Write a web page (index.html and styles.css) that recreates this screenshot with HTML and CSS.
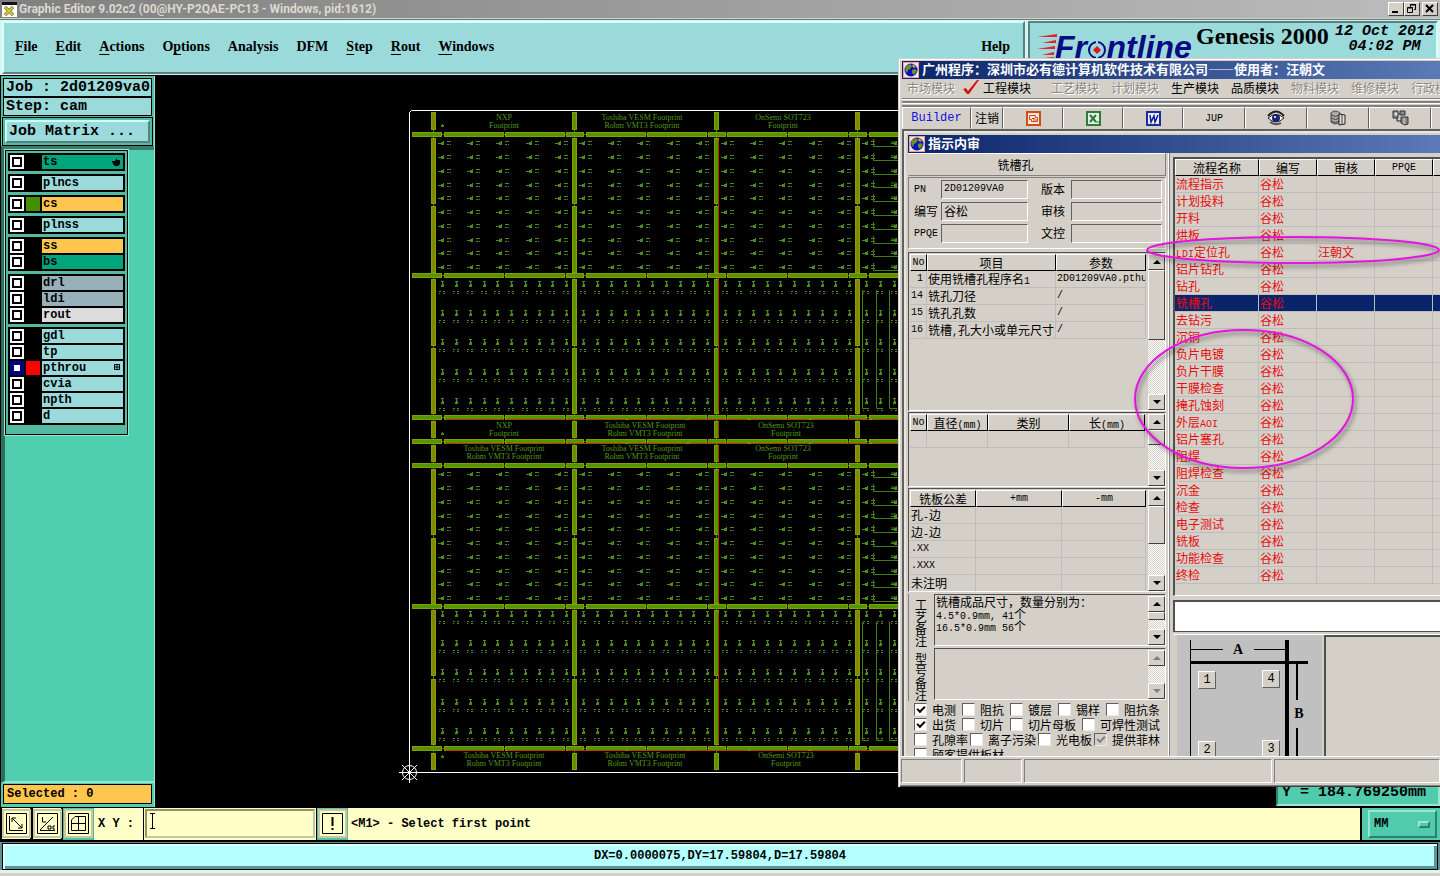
FILE: index.html
```html
<!DOCTYPE html>
<html lang="zh-CN">
<head>
<meta charset="utf-8">
<title>Graphic Editor 9.02c2</title>
<link rel="stylesheet" href="styles.css">
</head>
<body>
<svg class="defs" width="0" height="0" aria-hidden="true">
  <defs>
    <symbol id="globe" viewBox="0 0 16 16">
      <rect width="16" height="16" fill="#e8a0a0"/><rect x="1" y="1" width="14" height="14" fill="#f4dede"/>
      <circle cx="8" cy="8" r="6.5" fill="#0a14b4"/><path d="M3 4l4-2 2 2-2 3-2 1-1 3-2-3zM9 8l3-1 2 2-3 4-2-2z" fill="#6f8f2a"/>
      <path d="M10 2l3 3-2 1-2-2z" fill="#c8a040"/><path d="M13 14l2-4v5h-6z" fill="#fff"/>
    </symbol>
    <g id="ca" fill="#4a8c1c"><path d="M0 0h3v1H0zM3-1h3v3H3zM5-2h1v1H5z"/><path d="M9-2h3v1H9zM9 1h2v1H9zM12 1h1v1h-1zM12-2h1v1h-1z"/></g>
    <g id="cb" fill="#4a8c1c"><path d="M-1-3h3v1h-1v2h1v3h-3V1h1v-3h-1z"/><path d="M-3 7h2v1h-2zM1 7h2v1H1zM-3 9h1v1h-1zM1 9h2v1H1z"/></g>
    <g id="ra"><use href="#ca"/><use href="#ca" x="29"/><use href="#ca" x="58"/><use href="#ca" x="88"/><use href="#ca" x="117"/></g>
    <g id="ra2"><use href="#ra"/><use href="#ra" y="14"/></g>
    <g id="cellA"><use href="#ra2"/><use href="#ra2" y="28"/><use href="#ra2" y="55"/><use href="#ra2" y="83"/><use href="#ra2" y="110"/></g>
    <g id="rb2"><use href="#cb"/><use href="#cb" x="14"/></g>
    <g id="rb"><use href="#rb2"/><use href="#rb2" x="28"/><use href="#rb2" x="55"/><use href="#rb2" x="83"/><use href="#rb2" x="110"/></g>
    <g id="cellB"><use href="#rb"/><use href="#rb" y="29"/><use href="#rb" y="58"/><use href="#rb" y="88"/><use href="#rb" y="117"/></g>
    <g id="hs"><rect x="444" y="-2" width="59" height="4"/><rect x="505" y="-2" width="59" height="4"/><rect x="566" y="-2" width="17" height="4"/></g>
    <g id="hbar" fill="#4f9600" stroke="#8c9a00"><path d="M412 0H900" stroke="#3f8010"/><rect x="412" y="-2" width="29" height="4"/><use href="#hs"/><use href="#hs" x="142"/><use href="#hs" x="283"/><rect x="869" y="-2" width="59" height="4"/></g>
    <g id="vbar" stroke="#8c9a00"><path d="M0 112V770" stroke="#3f8010"/>
      <rect x="-2" y="112" width="4" height="17"/><rect x="-2" y="138" width="4" height="65"/><rect x="-2" y="206" width="4" height="66"/><rect x="-2" y="279" width="4" height="66"/><rect x="-2" y="348" width="4" height="65"/><rect x="-2" y="421" width="4" height="16"/><rect x="-2" y="445" width="4" height="16"/><rect x="-2" y="469" width="4" height="65"/><rect x="-2" y="538" width="4" height="65"/><rect x="-2" y="610" width="4" height="65"/><rect x="-2" y="679" width="4" height="65"/><rect x="-2" y="753" width="4" height="16"/></g>
    <g id="lshape" fill="none" stroke="#3f8010"><path d="M873.500 -4V3.500H899M891 -1h5"/></g>
    <g id="ls5"><use href="#lshape"/><use href="#lshape" y="14"/><use href="#lshape" y="28"/><use href="#lshape" y="41"/><use href="#lshape" y="55"/></g>
  </defs>
</svg>

<header class="titlebar">
  <svg class="app-icon" width="15" height="15" viewBox="0 0 15 15"><rect width="15" height="15" fill="#fff"/><rect width="15" height="3" fill="#112"/><path d="M3 5l8 8M11 5l-8 8" stroke="#333" stroke-width="3"/><path d="M3 5l8 8M11 5l-8 8" stroke="#d8d020" stroke-width="2"/></svg>
  <h1>Graphic Editor 9.02c2 (00@HY-P2QAE-PC13 - Windows, pid:1612)</h1>
  <div class="winbtns">
    <button aria-label="Minimize"><svg width="12" height="10"><path d="M2 8h6" stroke="#000" stroke-width="2"/></svg></button>
    <button aria-label="Restore"><svg width="12" height="10" fill="none" stroke="#000"><path d="M4.500 3V.5h5v5H8M4 1h6M1.500 4v4.500h5v-5h-5M1 4h6"/></svg></button>
    <button class="close" aria-label="Close"><svg width="12" height="10"><path d="M2 1l7 7M9 1l-7 7" stroke="#000" stroke-width="2"/></svg></button>
  </div>
</header>

<div class="top">
  <nav class="menu">
    <a href="#"><u>F</u>ile</a><a href="#"><u>E</u>dit</a><a href="#"><u>A</u>ctions</a><a href="#">O<u>p</u>tions</a><a href="#">Analysis</a><a href="#">DFM</a><a href="#"><u>S</u>tep</a><a href="#"><u>R</u>out</a><a href="#"><u>W</u>indows</a>
    <a href="#" class="help">Help</a>
  </nav>
  <div class="brand">
    <svg class="logo" width="162" height="36" viewBox="0 0 162 36">
      <g fill="#e8202a"><path d="M4 6l20-3v3zM9 12l14-3v3zM4 18l18-3v3zM9 24l12-3v3zM1 28l20-2v2z"/></g>
      <text x="22" y="27" class="logo-text">Fr<tspan fill="none">o</tspan>ntline</text>
      <circle cx="64" cy="19" r="8" fill="none" stroke="#0a0a82" stroke-width="2"/><path d="M64 15l4 4-4 4-4-4z" fill="#e8101a"/><path d="M64 9v4M64 25v4" stroke="#9bdada" stroke-width="2"/>
    </svg>
    <div class="product"><strong>Genesis 2000</strong><span>Graphic Editor</span></div>
    <time>12 Oct 2012<br>04:02 PM</time>
  </div>
</div>

<main class="work">
  <aside class="side">
    <div class="job"><p>Job : 2d01209va0</p><p>Step: cam</p></div>
    <div class="matrix"><button>Job Matrix ...</button></div>
    <div class="layers-wrap">
      <div class="layers">
        <div class="grp"><label class="g"><input type="checkbox"><i></i><span>ts</span><svg class="mark" width="9" height="8"><path d="M0 3h3l2-3v2h3v4l-2 2H3L1 6z"/></svg></label></div>
        <div class="grp"><label><input type="checkbox"><i></i><span>plncs</span></label></div>
        <div class="grp"><label class="o"><input type="checkbox"><i class="green"></i><span>cs</span></label></div>
        <div class="grp"><label><input type="checkbox"><i></i><span>plnss</span></label></div>
        <div class="grp"><label class="o"><input type="checkbox"><i></i><span>ss</span></label><label class="g"><input type="checkbox"><i></i><span>bs</span></label></div>
        <div class="grp"><label class="b"><input type="checkbox"><i></i><span>drl</span></label><label class="b"><input type="checkbox"><i></i><span>ldi</span></label><label class="w"><input type="checkbox"><i></i><span>rout</span></label></div>
        <div class="grp"><label><input type="checkbox"><i></i><span>gdl</span></label><label><input type="checkbox"><i></i><span>tp</span></label><label><input type="checkbox" checked><i class="red"></i><span>pthrou</span><svg class="mark" width="7" height="7" fill="none" stroke="#000"><path d="M.5.5h5v5h-5zM3 .5v5M.5 3h5"/></svg></label><label><input type="checkbox"><i></i><span>cvia</span></label><label><input type="checkbox"><i></i><span>npth</span></label><label><input type="checkbox"><i></i><span>d</span></label></div>
      </div>
    </div>
    <p class="selected">Selected : 0</p>
  </aside>
  <section class="board">
    <svg class="pcb" width="100%" height="100%" aria-label="PCB panel">
      <g transform="translate(-155 -76)">
        <path d="M900 110.500H411.500L409.500 112.500V772.500H900" fill="none" stroke="#fff"/>
        <use href="#cellA" x="438" y="143"/><use href="#cellA" x="579" y="143"/><use href="#cellA" x="721" y="143"/>
        <use href="#cellB" x="442" y="284"/><use href="#cellB" x="583" y="284"/><use href="#cellB" x="725" y="284"/>
        <use href="#cellA" x="438" y="474"/><use href="#cellA" x="579" y="474"/><use href="#cellA" x="721" y="474"/>
        <use href="#cellB" x="442" y="614"/><use href="#cellB" x="583" y="614"/><use href="#cellB" x="725" y="614"/>
        <use href="#cellA" x="862" y="143"/><use href="#cellA" x="862" y="474"/><use href="#cellB" x="866" y="284"/><use href="#cellB" x="866" y="614"/>
        <use href="#ls5" y="143"/><use href="#ls5" y="212"/><use href="#ls5" y="474"/><use href="#ls5" y="543"/>
        <path d="M862.500 290V408.500H868M876.500 290V408.500H882M889.500 290V408.500H896M862.500 622V740.500H868M876.500 622V740.500H882M889.500 622V740.500H896" fill="none" stroke="#3f8010"/>
        <g transform="translate(.5 .5)">
          <use href="#vbar" x="433" fill="#7d8c00"/><use href="#vbar" x="574" fill="#5c9400"/><use href="#vbar" x="716" fill="#4f9600"/><use href="#vbar" x="857" fill="#7d8c00"/>
          <path d="M718 139V411M718 421V437M718 445V461M718 470V602M718 612V743" stroke="#c02800"/>
          <use href="#hbar" y="134"/><use href="#hbar" y="275"/><use href="#hbar" y="417"/><use href="#hbar" y="441"/><use href="#hbar" y="465"/><use href="#hbar" y="606"/><use href="#hbar" y="748"/>
          <path d="M445 419H898M445 443H898M445 750H898" stroke="#c03800" stroke-dasharray="58 3"/>
        </g>
        <g class="silk">
          <text x="504" y="120">NXP</text><text x="504" y="128">Footprint</text>
          <text x="642" y="120">Toshiba VESM Footprint</text><text x="642" y="128">Rohm VMT3 Footprint</text>
          <text x="783" y="120">OnSemi SOT723</text><text x="783" y="128">Footprint</text>
          <text x="504" y="428">NXP</text><text x="504" y="436">Footprint</text>
          <text x="645" y="428">Toshiba VESM Footprint</text><text x="645" y="436">Rohm VMT3 Footprint</text>
          <text x="786" y="428">OnSemi SOT723</text><text x="786" y="436">Footprint</text>
          <text x="504" y="451">Toshiba VESM Footprint</text><text x="504" y="459">Rohm VMT3 Footprint</text>
          <text x="642" y="451">Toshiba VESM Footprint</text><text x="642" y="459">Rohm VMT3 Footprint</text>
          <text x="783" y="451">OnSemi SOT723</text><text x="783" y="459">Footprint</text>
          <text x="504" y="758">Toshiba VESM Footprint</text><text x="504" y="766">Rohm VMT3 Footprint</text>
          <text x="645" y="758">Toshiba VESM Footprint</text><text x="645" y="766">Rohm VMT3 Footprint</text>
          <text x="786" y="758">OnSemi SOT723</text><text x="786" y="766">Footprint</text>
        </g>
        <path d="M442 124h1v1h1v2h-3v-2h1zM442 432h1v1h1v2h-3v-2h1zM442 755h1v1h1v2h-3v-2h1z" fill="#3f8010"/>
        <g fill="none" stroke="#fff"><circle cx="409.500" cy="772.500" r="7"/><path d="M399 772.500h21M409.500 762v21M402 765l15 15M417 765l-15 15"/></g>
      </g>
    </svg>
    <div class="coord">Y = 184.769250mm</div>
  </section>
</main>

<div class="cmd">
  <button class="tool" aria-label="Zoom"><svg width="21" height="21" fill="none" stroke="#000"><path d="M.5.5h20v20H.5zM3.500 3v14.500H17M6 5l10 10M6 9V5h4M16 11v4h-4"/></svg></button>
  <button class="tool" aria-label="Angle"><svg width="21" height="21" fill="none" stroke="#000"><path d="M.5.5h20v20H.5zM3 17.500h15M3 17L16 4M5.500 4v5H9M11 13h3v3h-3zM18 13h-2v3h2"/></svg></button>
  <button class="tool on" aria-label="Grid"><svg width="21" height="21" fill="none" stroke="#000"><path d="M.5.5h20v20H.5zM7 3.500h10.500v14H3.500V7zM10.500 4v13M4 10.500h13"/></svg></button>
  <label class="xy" for="xy">X Y :</label>
  <div class="field"><input id="xy" type="text"><svg class="ibeam" width="7" height="16" fill="none" stroke="#000"><path d="M1 .5h5M3.500 1v14M1 15.500h5"/></svg></div>
  <button class="tool on" aria-label="Alert"><svg width="21" height="21" fill="none" stroke="#000"><path d="M.5.5h20v20H.5z"/><path d="M10.500 4v9M10.500 15v2" stroke-width="2"/></svg></button>
  <p class="prompt">&lt;M1&gt; - Select first point</p>
  <div class="unit"><select aria-label="Unit"><option>MM</option></select><i></i></div>
</div>
<footer class="status"><p>DX=0.0000075,DY=17.59804,D=17.59804</p></footer>

<section class="program">
  <h2 class="bar"><svg width="16" height="16"><use href="#globe"/></svg><span>广州程序：深圳市必有德计算机软件技术有限公司——使用者：汪朝文</span></h2>
  <nav class="modules">
    <a href="#" class="off">市场模块</a><a href="#" class="picked"><svg width="18" height="16"><path d="M1 10l3-1 2 3 9-11h2L7 15H5z" fill="#d81010"/></svg>工程模块</a><a href="#" class="off">工艺模块</a><a href="#" class="off">计划模块</a><a href="#">生产模块</a><a href="#">品质模块</a><a href="#" class="off">物料模块</a><a href="#" class="off">维修模块</a><a href="#" class="off">行政模块</a>
  </nav>
  <div class="rails"></div>
  <div class="toolbar">
    <button class="builder">Builder</button><button class="logout">注销</button>
    <button class="t60" aria-label="PowerPoint"><svg width="15" height="15"><rect x="1" y="1" width="13" height="13" fill="#fbe5d8" stroke="#cf4d1a" stroke-width="2"/><path d="M3.500 4.500h6v2h2v4h-6v-2h-2zM6 7.500h3M7 9h4" fill="none" stroke="#cf4d1a"/></svg></button>
    <button class="t60" aria-label="Excel"><svg width="15" height="15"><rect x="1" y="1" width="13" height="13" fill="#e2f2e2" stroke="#2c7a3c" stroke-width="2"/><path d="M4 4l6 7M10 4l-6 7" stroke="#2c7a3c" stroke-width="2"/><path d="M10 11h3" stroke="#2c7a3c"/></svg></button>
    <button class="t60" aria-label="Word"><svg width="15" height="15"><rect x="1" y="1" width="13" height="13" fill="#e8ecff" stroke="#1c2ca0" stroke-width="2"/><path d="M4 4l1 7 3-6 1 6 3-7" fill="none" stroke="#101c90" stroke-width="1.500"/></svg></button>
    <button class="t62 jup">JUP</button>
    <button class="t62" aria-label="View"><svg width="18" height="16"><path d="M1 6Q9-3 17 6" fill="none" stroke="#222" stroke-width="2"/><path d="M1 8Q9 1 17 8Q9 16 1 8z" fill="#fff" stroke="#222"/><circle cx="9" cy="8" r="4" fill="#1c2470"/><circle cx="8" cy="7" r="1" fill="#fff"/><path d="M3 12q6 4 11 1" fill="none" stroke="#555" stroke-width="2"/></svg></button>
    <button class="t62" aria-label="Database"><svg width="17" height="16"><path d="M1 3q4-4 9 0v9q-5 4-9 0z" fill="#aaa" stroke="#444"/><path d="M1 5q4 3 9 0M1 8q4 3 9 0M1 11q4 3 9 0" fill="none" stroke="#444"/><path d="M9 4l6 1v9l-6 1z" fill="#ddd" stroke="#222"/><path d="M12 5v9" stroke="#444"/></svg></button>
    <button class="t62" aria-label="Network"><svg width="17" height="16"><path d="M1 1h5v7H1zM8 1h5v4H8zM9 7h7v7l-3 1-4-2z" fill="#888" stroke="#333"/><path d="M6 4h2M5 8v3h4" fill="none" stroke="#222"/><path d="M3 3h2v2H3zM12 8v6" stroke="#ddd" fill="#ddd"/></svg></button>
    <button class="t62" aria-label="More"></button>
  </div>

  <div class="child">
    <h3 class="bar"><svg width="16" height="16"><use href="#globe"/></svg><span>指示内审</span></h3>
    <div class="cols">
      <div class="left">
        <p class="caption">铣槽孔</p>
        <form class="info">
          <label for="pn" class="lat">PN</label><input id="pn" value="2D01209VA0" class="lat">
          <label for="ver">版本</label><input id="ver">
          <label for="wr">编写</label><input id="wr" value="谷松">
          <label for="ck">审核</label><input id="ck">
          <label for="pp" class="lat">PPQE</label><input id="pp">
          <label for="dc">文控</label><input id="dc">
        </form>
        <div class="pane p1">
          <div class="view"><table><colgroup><col class="c17"><col class="c129"><col class="c90"></colgroup>
            <thead><tr><th class="lat">No</th><th>项目</th><th>参数</th></tr></thead>
            <tbody><tr><td class="lat num">1</td><td>使用铣槽孔程序名<span class="lat">1</span></td><td class="lat">2D01209VA0.pthu</td></tr>
            <tr><td class="lat num">14</td><td>铣孔刀径</td><td class="lat">/</td></tr>
            <tr><td class="lat num">15</td><td>铣孔孔数</td><td class="lat">/</td></tr>
            <tr><td class="lat num">16</td><td>铣槽<span class="lat">,</span>孔大小或单元尺寸</td><td class="lat">/</td></tr></tbody></table></div>
          <div class="sb"><button class="up" aria-label="Up"></button><i class="thumb h70"></i><button class="dn" aria-label="Down"></button></div>
        </div>
        <div class="pane p2">
          <div class="view"><table><colgroup><col class="c17"><col class="c61"><col class="c81"><col class="c76"></colgroup>
            <thead><tr><th class="lat">No</th><th>直径<span class="lat">(mm)</span></th><th>类别</th><th>长<span class="lat">(mm)</span></th></tr></thead>
            <tbody><tr><td></td><td></td><td></td><td></td></tr></tbody></table></div>
          <div class="sb"><button class="up" aria-label="Up"></button><i class="thumb h15"></i><button class="dn" aria-label="Down"></button></div>
        </div>
        <div class="pane p3">
          <div class="view"><table><colgroup><col class="c66"><col class="c86"><col class="c84"></colgroup>
            <thead><tr><th>铣板公差</th><th class="lat">+mm</th><th class="lat">-mm</th></tr></thead>
            <tbody><tr><td>孔<span class="lat">-</span>边</td><td></td><td></td></tr><tr><td>边<span class="lat">-</span>边</td><td></td><td></td></tr><tr><td class="lat">.XX</td><td></td><td></td></tr><tr><td class="lat">.XXX</td><td></td><td></td></tr><tr><td>未注明</td><td></td><td></td></tr></tbody></table></div>
          <div class="sb"><button class="up" aria-label="Up"></button><i class="thumb h38"></i><button class="dn" aria-label="Down"></button></div>
        </div>
        <div class="notes">
          <span class="vert">工艺备注</span>
          <div class="pane memo"><div class="view" tabindex="0">铣槽成品尺寸，数量分别为：<br><span class="lat">4.5*0.9mm, 41</span>个<br><span class="lat">16.5*0.9mm 56</span>个</div>
            <div class="sb"><button class="up" aria-label="Up"></button><i class="thumb h8"></i><button class="dn" aria-label="Down"></button></div></div>
          <span class="vert">型号备注</span>
          <div class="pane memo"><div class="view"></div>
            <div class="sb"><button class="up" disabled aria-label="Up"></button><button class="dn" disabled aria-label="Down"></button></div></div>
        </div>
        <div class="checks">
          <div><label><input type="checkbox" checked>电测</label><label><input type="checkbox">阻抗</label><label><input type="checkbox">镀层</label><label><input type="checkbox">锡样</label><label><input type="checkbox">阻抗条</label></div>
          <div><label><input type="checkbox" checked>出货</label><label><input type="checkbox">切片</label><label><input type="checkbox">切片母板</label><label><input type="checkbox">可焊性测试</label></div>
          <div class="tight"><label><input type="checkbox">孔隙率</label><label><input type="checkbox">离子污染</label><label><input type="checkbox">光电板</label><label><input type="checkbox" checked disabled>提供菲林</label></div>
          <div><label><input type="checkbox">顾客提供板材</label></div>
        </div>
      </div>
      <div class="right">
        <div class="flow"><table><colgroup><col class="c84"><col class="c58"><col class="c58"><col class="c58"><col class="c84"></colgroup>
          <thead><tr><th>流程名称</th><th>编写</th><th>审核</th><th class="lat">PPQE</th><th></th></tr></thead>
          <tbody>
          <tr><td>流程指示</td><td>谷松</td><td></td><td></td><td></td></tr>
          <tr><td>计划投料</td><td>谷松</td><td></td><td></td><td></td></tr>
          <tr><td>开料</td><td>谷松</td><td></td><td></td><td></td></tr>
          <tr><td>烘板</td><td>谷松</td><td></td><td></td><td></td></tr>
          <tr><td><span class="lat">LDI</span>定位孔</td><td>谷松</td><td>汪朝文</td><td></td><td></td></tr>
          <tr><td>铝片钻孔</td><td>谷松</td><td></td><td></td><td></td></tr>
          <tr><td>钻孔</td><td>谷松</td><td></td><td></td><td></td></tr>
          <tr class="cur"><td>铣槽孔</td><td>谷松</td><td></td><td></td><td></td></tr>
          <tr><td>去钻污</td><td>谷松</td><td></td><td></td><td></td></tr>
          <tr><td>沉铜</td><td>谷松</td><td></td><td></td><td></td></tr>
          <tr><td>负片电镀</td><td>谷松</td><td></td><td></td><td></td></tr>
          <tr><td>负片干膜</td><td>谷松</td><td></td><td></td><td></td></tr>
          <tr><td>干膜检查</td><td>谷松</td><td></td><td></td><td></td></tr>
          <tr><td>掩孔蚀刻</td><td>谷松</td><td></td><td></td><td></td></tr>
          <tr><td>外层<span class="lat">AOI</span></td><td>谷松</td><td></td><td></td><td></td></tr>
          <tr><td>铝片塞孔</td><td>谷松</td><td></td><td></td><td></td></tr>
          <tr><td>阻焊</td><td>谷松</td><td></td><td></td><td></td></tr>
          <tr><td>阻焊检查</td><td>谷松</td><td></td><td></td><td></td></tr>
          <tr><td>沉金</td><td>谷松</td><td></td><td></td><td></td></tr>
          <tr><td>检查</td><td>谷松</td><td></td><td></td><td></td></tr>
          <tr><td>电子测试</td><td>谷松</td><td></td><td></td><td></td></tr>
          <tr><td>铣板</td><td>谷松</td><td></td><td></td><td></td></tr>
          <tr><td>功能检查</td><td>谷松</td><td></td><td></td><td></td></tr>
          <tr><td>终检</td><td>谷松</td><td></td><td></td><td></td></tr>
          </tbody></table></div>
        <input class="remark" aria-label="备注">
        <div class="lower">
          <div class="sketch">
            <svg width="145" height="122" aria-hidden="true">
              <path d="M13.500 5v117M13 14.500h33M77 14.500h32" stroke="#000"/><path d="M13 27.500h118" stroke="#000" stroke-width="3"/><path d="M110 5v117" stroke="#000" stroke-width="4"/><path d="M120 28v37M120 93v29" stroke="#000" stroke-width="2"/>
              <text x="61" y="19">A</text><text x="122" y="83">B</text>
            </svg>
            <button class="n1">1</button><button class="n4">4</button><button class="n2">2</button><button class="n3">3</button>
          </div>
          <div class="blank"></div>
        </div>
      </div>
    </div>
  </div>
  <div class="statusbar"><span class="s60"></span><span class="s58"></span><span class="s248"></span><span class="rest"></span></div>
</section>

<svg class="ink" width="100%" height="100%" aria-hidden="true">
  <ellipse cx="1293" cy="250" rx="146" ry="13"/><ellipse cx="1244" cy="399" rx="109" ry="69"/>
</svg>
</body>
</html>
```

FILE: styles.css
```css
*, *::before { box-sizing: border-box; }
body { margin: 0; height: 100vh; min-height: 840px; position: relative; display: flex; flex-direction: column; overflow: hidden; background: #5f8f90; font: 12px "Liberation Mono", "Noto Sans CJK SC", monospace; color: #000; }
h1, h2, h3, p { margin: 0; font-weight: bold; }
a { color: inherit; text-decoration: none; }
button, input, select { font: inherit; color: inherit; margin: 0; padding: 0; border-radius: 0; }
.defs { position: absolute; }

.titlebar { flex: 0 0 19px; display: flex; align-items: center; gap: 2px; padding: 0 2px; background: linear-gradient(90deg, #808080, #bcbcbc); border-bottom: 1px solid #d4d0c8; }
.titlebar h1 { flex: 1; font: bold 12px Roboto, sans-serif; line-height: 18px; color: #dcd8d0; }
.winbtns { display: flex; }
.winbtns button { width: 16px; height: 14px; background: #d4d0c8; border: 1px solid; border-color: #fff #404040 #404040 #fff; display: flex; justify-content: center; align-items: center; }
.winbtns .close { margin-left: 2px; }

.top { flex: 0 0 57px; display: flex; gap: 3px; background: #d8f4f0; padding: 1px 2px 1px 2px; border-top: 1px solid #5a7f7e; border-bottom: 1px solid #000; }
.menu, .brand { background: #9bdada; border: 2px solid; border-color: #d4fffb #5a8080 #5a8080 #d4fffb; }
.menu { flex: 1; display: flex; align-items: center; gap: 18px; padding: 0 13px 2px 11px; font: bold 14px "Liberation Serif", serif; }
.menu u { text-underline-offset: 3px; }
.help { margin-left: auto; }
.brand { flex: 0 0 410px; display: flex; align-items: flex-start; padding-left: 3px; overflow: hidden; border-color: #5a8080 #d4fffb #d4fffb #5a8080; }
.logo { margin-top: 8px; flex: none; }
.logo-text { font: italic bold 32px "Liberation Sans", sans-serif; fill: #0a0a82; }
.product { flex: none; width: 138px; font-family: "Liberation Serif", serif; }
.product strong { display: block; font-size: 24px; line-height: 26px; padding-left: 1px; white-space: nowrap; }
.product span { display: block; margin: 7px 0 0 10px; font-size: 14px; line-height: 16px; font-weight: bold; }
.brand time { flex: 1; font: italic bold 15px "Liberation Mono", monospace; line-height: 15px; text-align: center; white-space: nowrap; padding-top: 1px; }

.work { flex: 1; min-height: 0; display: flex; background: #000; padding-left: 1px; }
.side { flex: 0 0 154px; display: flex; flex-direction: column; background: #50cfb0; border-right: 1px solid #9be5d2; font-weight: bold; }
.job { padding: 2px 2px 1px; background: #55baa2; }
.job p { border: 1px solid #000; background: #9bdada; font: bold 15px "Liberation Mono", monospace; line-height: 17px; padding-left: 2px; white-space: nowrap; }
.matrix { margin: 0 1px; border: 1px solid #000; background: #55baa2; padding: 2px; }
.matrix button { width: 100%; height: 23px; background: #9bdada; border: 2px solid; border-color: #c8fffa #5a8080 #5a8080 #c8fffa; font: bold 15px "Liberation Mono", monospace; text-align: left; padding-left: 2px; display: flex; align-items: center; }
.layers-wrap { flex: 1; border-left: 4px solid #2f6f60; border-top: 4px solid #3a7d6d; border-bottom: 2px solid #9be5d2; }
.layers { width: 123px; border: 1px solid #000; outline: 1px solid #9be5d2; background: #55baa2; padding: 2px 2px 9px; display: flex; flex-direction: column; gap: 3px; }
.grp { background: #000; border: 1px solid #000; }
.grp label { display: flex; height: 16px; gap: 2px; padding: 1px; position: relative; }
.grp input { appearance: none; width: 14px; height: 14px; background: #fff; border: 0; display: grid; place-items: center; }
.grp input::before { content: ""; width: 10px; height: 10px; border: 2px solid #000; background: #fff; }
.grp input:checked { background: #000080; }
.grp input:checked::before { border-color: #000080; }
.grp i { width: 14px; height: 14px; background: #000; }
.grp i.green { background: #429000; }
.grp i.red { background: #f00; }
.grp span { flex: 1; background: #9bdada; line-height: 14px; padding-left: 1px; }
.grp .g span { background: #00a57c; }
.grp .o span { background: #ffc64f; }
.grp .b span { background: #97b0ba; }
.grp .w span { background: #dcdcdc; }
.mark { position: absolute; right: 3px; top: 4px; }
.selected { margin: 1px 2px 3px; border: 1px solid #000; background: #ffc64f; line-height: 18px; padding-left: 3px; }
.board { flex: 1; min-width: 0; position: relative; }
.pcb { display: block; position: absolute; }
.silk text { font: 8px "Liberation Serif", serif; fill: #529a14; text-anchor: middle; }
.coord { position: absolute; right: 0; bottom: 1px; width: 164px; height: 60px; background: #50cbac; border: 2px solid; border-color: #9be5d2 #9be5d2 #9be5d2 #2f7f6f; padding: 36px 0 0 4px; font: bold 15px "Liberation Mono", monospace; line-height: 17px; white-space: nowrap; }

.cmd { flex: 0 0 35px; display: flex; background: #ffffc8; border: solid #000; border-width: 1px 0 2px 1px; font-weight: bold; }
.tool { width: 31px; height: 32px; background: #ffffc8; border: 1px solid #000; border-width: 0 2px 1px 1px; padding: 0; display: grid; place-items: center; }
.tool svg { box-sizing: content-box; padding: 2px; border: 2px solid #c8c8a0; background: #ffffc8; }
.tool.on { background: #50cbac; border-color: #55baa2; }
.xy { width: 49px; line-height: 32px; padding-left: 4px; }
.field { position: relative; width: 174px; border-left: 1px solid #000; border-right: 1px solid #000; padding: 1px; }
.field input { width: 100%; height: 29px; background: #ffffc8; border: 2px solid; border-color: #94946c #c8c8a0 #c8c8a0 #94946c; padding: 0 12px; }
.ibeam { position: absolute; left: 5px; top: 5px; }
.prompt { flex: 1; line-height: 32px; padding-left: 3px; }
.unit { position: relative; width: 80px; background: #50cbac; border-left: 2px solid #000; padding: 2px 3px 1px 6px; }
.unit select { appearance: none; width: 100%; height: 28px; background: #50cbac; border: 2px solid; border-color: #9be5d2 #2f7f6f #2f7f6f #9be5d2; padding-left: 4px; font-weight: bold; }
.unit i { position: absolute; right: 10px; top: 13px; width: 12px; height: 7px; border: 2px solid; border-color: #9be5d2 #2f7f6f #2f7f6f #9be5d2; }
.status { flex: 0 0 34px; padding: 1px 2px 6px; background: linear-gradient(#5f8f90 28px, #d8f8f0 28px 31px, #d4d0c8 31px); }
.status p { height: 27px; border: 1px solid #000; background: #b4ffff; box-shadow: inset 2px 2px #e4ffff, inset -3px -3px #5f9494; line-height: 25px; text-align: center; }

.program { position: absolute; left: 898px; right: 0; top: 58px; bottom: 89px; background: #d4d0c8; border: solid #d4d0c8; border-width: 1px 0 0 1px; box-shadow: inset 1px 1px #fff, inset 0 -1px #404040, inset 0 -2px #808080; padding: 2px 0 4px 3px; display: flex; flex-direction: column; overflow: hidden; font-family: "Noto Sans CJK SC", sans-serif; }
.program .lat { font-family: "Liberation Mono", monospace; font-size: 10px; }
.program span.lat { line-height: 0; }
.bar { flex: none; height: 18px; line-height: 16px; font-size: 13px; color: #fff; background: linear-gradient(90deg, #0a246a, #6a8cc6 120%); display: flex; align-items: center; gap: 3px; padding-left: 1px; white-space: nowrap; }
.bar svg { flex: none; }
.bar span { padding-bottom: 2px; }
.modules { height: 19px; flex: none; display: flex; gap: 12px; padding-left: 5px; line-height: 17px; white-space: nowrap; }
.modules a { flex: none; }
.modules .off { color: #8c8984; text-shadow: 1px 1px #fff; }
.modules .picked { display: flex; gap: 3px; margin: 0 8px 0 -5px; }
.rails { flex: none; height: 9px; border: solid #808080; border-width: 1px 0 2px; background: linear-gradient(#fff 1px, #d4d0c8 1px 2px, #808080 2px 4px, #fff 4px 5px, #d4d0c8 5px); }
.toolbar { flex: none; height: 22px; display: flex; }
.toolbar button { flex: none; background: #d4d0c8; border: 1px solid; border-color: #fff #606060 #d4d0c8 #fff; display: flex; align-items: center; justify-content: center; white-space: nowrap; }
.builder { width: 69px; }
.toolbar .builder { font-family: "Liberation Mono", monospace; color: #1010e0; }
.logout { width: 32px; }
.toolbar .logout { padding-bottom: 1px; }
.t60 { width: 60px; }
.t62 { width: 62px; }
.toolbar .jup { font: 10px "Liberation Mono", monospace; }
.child { flex: 1; min-height: 0; border: solid #606060; border-width: 2px 0 0 2px; box-shadow: inset 2px 2px #e8e5df; padding: 4px 0 0 4px; overflow: hidden; display: flex; flex-direction: column; }
.cols { flex: 1; min-height: 0; display: flex; overflow: hidden; }
.left { flex: 0 0 259px; border-right: 1px solid #fff; padding-right: 2px; }
.caption { height: 23px; line-height: 21px; margin-bottom: 1px; padding-right: 43px; text-align: center; font-weight: normal; border: 1px solid; border-color: #fff #808080 #808080 #d4d0c8; }
.info { height: 72px; margin-bottom: 3px; display: grid; grid-template-columns: 25px 87px 32px 98px; grid-auto-rows: 19px; column-gap: 2px; row-gap: 3px; padding: 2px 0 0 5px; border: 1px solid; border-color: #808080 #fff #fff #808080; line-height: 18px; }
.info label { white-space: nowrap; text-align: left; }
.info label:nth-of-type(even) { padding-left: 11px; }
.info label.lat { line-height: 20px; }
.info input { width: 100%; background: #d4d0c8; border: 1px solid; border-color: #606060 #fff #fff #606060; padding: 0 0 2px 2px; }
.info label:nth-of-type(even) + input { margin-left: 7px; width: 91px; }

.pane { display: flex; border: 1px solid; border-color: #505050 #fff #fff #505050; padding: 1px 0 0 1px; overflow: hidden; }
.view { flex: 1; overflow: hidden; }
.p1 { height: 159px; margin-bottom: 1px; }
.p2 { height: 75px; margin-bottom: 1px; }
.p3 { height: 104px; margin-bottom: 2px; }
table { border-collapse: separate; border-spacing: 0; table-layout: fixed; width: 1px; line-height: 15px; }
th { height: 17px; padding: 0; line-height: 14px; font-weight: normal; border: 1px solid; border-color: #fff #000 #000 #fff; overflow: hidden; white-space: nowrap; }
td { height: 17px; padding: 0 0 1px 1px; border: solid #bdbdbd; border-width: 0 1px 1px 0; overflow: hidden; white-space: nowrap; }
td.num { text-align: right; padding-right: 3px; }
.c17 { width: 17px; } .c129 { width: 129px; } .c90 { width: 90px; } .c61 { width: 61px; } .c81 { width: 81px; } .c76 { width: 76px; }
.c66 { width: 66px; } .c86 { width: 86px; } .c84 { width: 84px; } .c58 { width: 58px; }
.sb { flex: 0 0 17px; display: flex; flex-direction: column; background: repeating-conic-gradient(#fff 0 25%, #d4d0c8 0 50%) 0 0 / 2px 2px; }
.sb button, .thumb { flex: none; height: 16px; background: #d4d0c8; border: 1px solid; border-color: #fff #404040 #404040 #fff; }
.sb button { display: grid; place-items: center; }
.sb button::before { content: ""; border: 4px solid transparent; border-top-width: 0; border-bottom-color: #000; }
.sb .dn { margin-top: auto; }
.sb .dn::before { border-width: 4px 4px 0; border-color: #000 transparent transparent; }
.sb button:disabled::before { border-bottom-color: #808080; }
.sb .dn:disabled::before { border-top-color: #808080; }
.sb .h70 { height: 70px; }
.sb .h15 { height: 15px; }
.sb .h38 { height: 38px; }
.sb .h8 { height: 8px; }
.notes { display: grid; grid-template-columns: 14px 232px; column-gap: 5px; row-gap: 1px; padding-left: 6px; border-left: 1px solid #808080; }
.vert { width: 12px; line-height: 12px; white-space: normal; word-break: break-all; padding-top: 5px; height: 53px; }
.memo { height: 52px; line-height: 12px; }
.memo .view { white-space: nowrap; }
.checks { padding: 1px 0 0 6px; }
.checks div { display: flex; gap: 6px; height: 15px; }
.checks .tight { gap: 2px; }
.checks label { display: flex; align-items: center; gap: 5px; line-height: 14px; white-space: nowrap; }
.checks input { appearance: none; width: 13px; height: 13px; background: #fff; border: 1px solid; border-color: #606060 #e8e8e8 #e8e8e8 #606060; display: grid; place-items: center; }
.checks input:checked::before { content: ""; width: 8px; height: 5px; border: solid #000; border-width: 0 0 2px 2px; transform: translateY(-1px) rotate(-45deg); }
.checks input:disabled { background: #d4d0c8; }
.checks input:disabled::before { border-color: #808080; }

.right { flex: 1; min-width: 0; padding: 4px 0 0 3px; border-left: 1px solid #808080; display: flex; flex-direction: column; }
.flow { flex: none; height: 439px; border: solid #505050; border-width: 2px 0 0 2px; border-bottom: 1px solid #fff; overflow: hidden; }
.flow td { color: #e80c10; }
.flow .cur td { background: #0a246a; }
.remark { flex: none; height: 32px; margin: 4px 0 2px; background: #fff; border: solid #505050; border-width: 2px 0 1px 2px; }
.lower { flex: 1; min-height: 0; display: flex; border-top: 1px solid #fff; }
.sketch { flex: 0 0 149px; position: relative; padding-left: 4px; overflow: hidden; }
.sketch svg { display: block; background: #c0c0c0; }
.sketch text { font: bold 14px "Liberation Serif", serif; text-anchor: middle; }
.sketch button { position: absolute; width: 18px; height: 18px; background: #d4d0c8; border: 1px solid; border-color: #fff #606060 #606060 #fff; font: 12px "Liberation Mono", monospace; }
.sketch .n1 { left: 25px; top: 36px; }
.sketch .n4 { left: 89px; top: 35px; }
.sketch .n2 { left: 25px; top: 106px; }
.sketch .n3 { left: 89px; top: 105px; }
.blank { flex: 1; margin-left: 2px; border: solid #505050; border-width: 2px 0 0 2px; }
.statusbar { flex: none; display: flex; gap: 2px; height: 27px; border-top: 1px solid #fff; padding-top: 2px; margin-left: -1px; }
.statusbar span { border: 1px solid; border-color: #808080 #fff #fff #808080; }
.s60 { width: 61px; } .s58 { width: 58px; } .s248 { width: 248px; } .rest { flex: 1; }

.ink { position: absolute; inset: 0; pointer-events: none; filter: drop-shadow(2px 3px 2px rgba(0, 0, 0, .5)); }
.ink ellipse { fill: none; stroke: #e614e0; stroke-width: 2; }
```
